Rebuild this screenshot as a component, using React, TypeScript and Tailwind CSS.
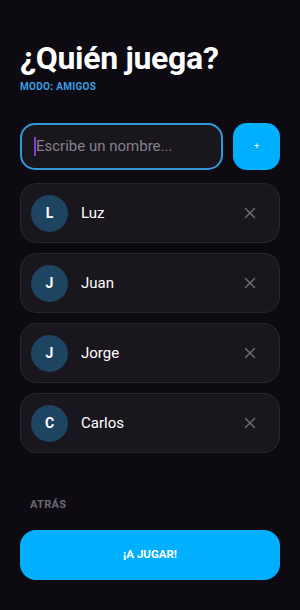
import { X } from 'lucide-react'

const players = ['Luz', 'Juan', 'Jorge', 'Carlos']

function PlayerRow({ name }: { name: string }) {
  return (
    <div className="flex h-[60px] items-center rounded-[16px] border border-[#2a2630] bg-[#1a161e] pl-[10px] pr-[20px]">
      <div className="flex h-[37px] w-[37px] items-center justify-center rounded-full bg-[#1d4460] text-[14px] font-bold text-white">
        {name[0]}
      </div>
      <span className="ml-[13px] flex-1 text-[15px] font-normal text-white">{name}</span>
      <X className="h-[18px] w-[18px] text-[#6e6a74]" strokeWidth={2} />
    </div>
  )
}

export default function App() {
  return (
    <div
      className="flex min-h-[610px] w-[300px] flex-col bg-[#0d0a12] px-[20px]"
      style={{ fontFamily: 'Roboto, "Noto Sans", sans-serif' }}
    >
      <h1 className="mt-[39px] text-[32px] leading-[38px] font-bold tracking-[-0.3px] text-white">
        ¿Quién juega?
      </h1>
      <div className="mt-[3px] text-[10px] leading-[14px] font-bold tracking-[0.3px] text-[#3a9ee0]">MODO: AMIGOS</div>

      <div className="mt-[29px] flex gap-[10px]">
        <div className="flex h-[47px] flex-1 items-center rounded-[15px] border-2 border-[#2f9ad6] bg-[#1a161e] pl-[12px]">
          <span className="h-[19px] w-[2px] bg-[#8a3cc8]" />
          <span className="text-[15px] text-[#83808a]">Escribe un nombre...</span>
        </div>
        <button className="flex h-[47px] w-[47px] items-center justify-center rounded-[14px] bg-[#00b0ff] text-[9px] text-white">
          +
        </button>
      </div>

      <div className="mt-[13px] flex flex-col gap-[10px]">
        {players.map((p) => (
          <PlayerRow key={p} name={p} />
        ))}
      </div>

      <div className="mt-[44px] pl-[10px] text-[11px] font-bold tracking-[0.3px] text-[#6c6972]">ATRÁS</div>

      <button className="mt-[16px] flex h-[50px] w-full items-center justify-center rounded-[16px] bg-[#00b0ff] text-[11.5px] font-bold text-white">
        ¡A JUGAR!
      </button>
    </div>
  )
}
